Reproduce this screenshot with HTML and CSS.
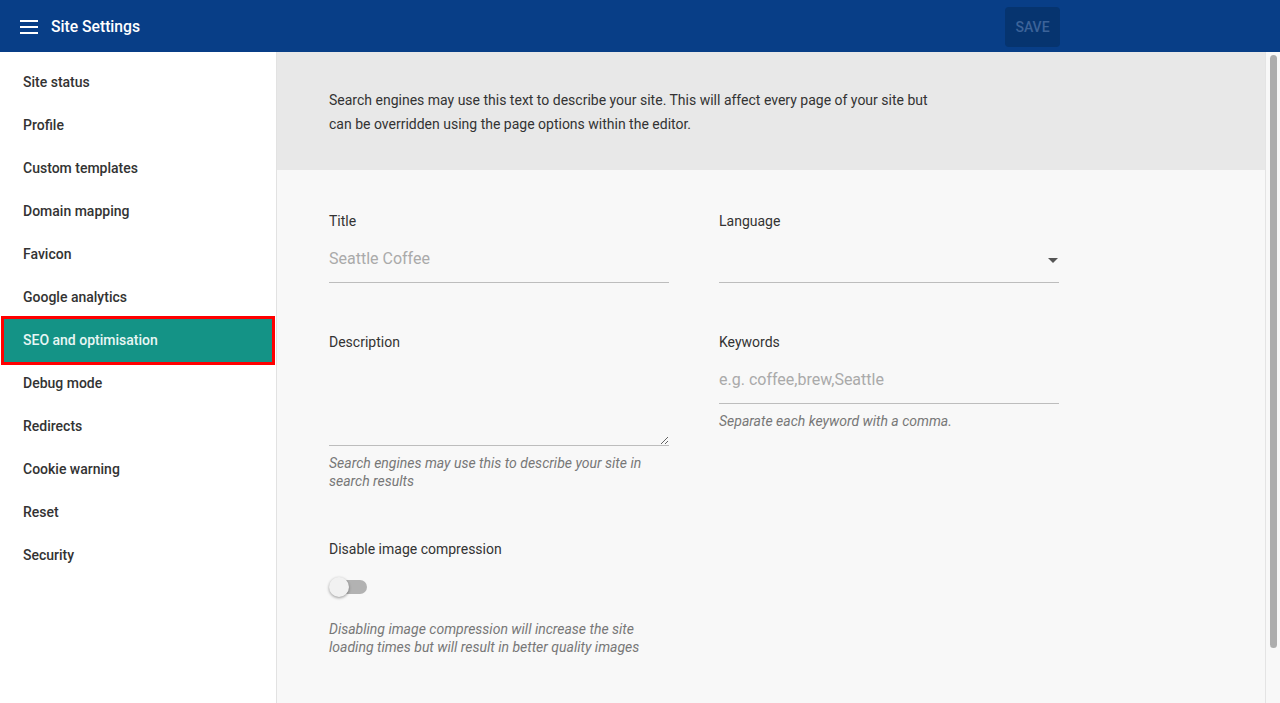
FILE: index.html
```html
<!DOCTYPE html>
<html lang="en">
<head>
  <meta charset="UTF-8" />
  <meta name="viewport" content="width=device-width, initial-scale=1.0"/>
  <title>Site Settings</title>
  <link rel="stylesheet" href="styles.css">
</head>
<body>
  <header class="topbar">
    <div class="menu-icon">
      <svg width="18" height="14" viewBox="0 0 18 14"><path d="M0 1h18M0 7h18M0 13h18" stroke="#fff" stroke-width="2"/></svg>
    </div>
    <div class="app-title">Site Settings</div>
    <button class="save-btn" disabled>SAVE</button>
  </header>

  <div class="layout">
    <nav class="sidebar">
      <a class="nav-item">Site status</a>
      <a class="nav-item">Profile</a>
      <a class="nav-item">Custom templates</a>
      <a class="nav-item">Domain mapping</a>
      <a class="nav-item">Favicon</a>
      <a class="nav-item">Google analytics</a>
      <a class="nav-item active">SEO and optimisation</a>
      <a class="nav-item">Debug mode</a>
      <a class="nav-item">Redirects</a>
      <a class="nav-item">Cookie warning</a>
      <a class="nav-item">Reset</a>
      <a class="nav-item">Security</a>
    </nav>

    <main class="content">
      <div class="intro">
        <p>Search engines may use this text to describe your site. This will affect every page of your site but can be overridden using the page options within the editor.</p>
      </div>

      <div class="form">
        <div class="row">
          <div class="field">
            <label for="title">Title</label>
            <input id="title" type="text" placeholder="Seattle Coffee">
          </div>
          <div class="field">
            <label for="language">Language</label>
            <div class="select">
              <select id="language"><option></option></select>
              <span class="arrow"></span>
            </div>
          </div>
        </div>

        <div class="row">
          <div class="field">
            <label for="description">Description</label>
            <textarea id="description"></textarea>
            <div class="hint">Search engines may use this to describe your site in search results</div>
          </div>
          <div class="field">
            <label for="keywords">Keywords</label>
            <input id="keywords" type="text" placeholder="e.g. coffee,brew,Seattle">
            <div class="hint">Separate each keyword with a comma.</div>
          </div>
        </div>

        <div class="row">
          <div class="field">
            <label>Disable image compression</label>
            <div class="toggle">
              <span class="track"></span>
              <span class="thumb"></span>
            </div>
            <div class="hint hint-far">Disabling image compression will increase the site loading times but will result in better quality images</div>
          </div>
        </div>
      </div>
    </main>

    <!-- page scrollbar -->
    <div class="scrollbar">
      <div class="scroll-thumb"></div>
    </div>
  </div>
</body>
</html>
```

FILE: styles.css
```css
* {
  box-sizing: border-box;
}
body {
  margin: 0;
  height: 703px;
  overflow: hidden;
  font-family: Roboto, "Noto Sans", sans-serif;
  color: #333;
  background: #fff;
}
.topbar {
  height: 52px;
  background: #083e87;
  display: flex;
  align-items: center;
  padding: 1px 220px 0 20px;
}
.menu-icon {
  width: 18px;
  height: 14px;
  display: flex;
}
.app-title {
  color: #fff;
  font-size: 15.7px;
  font-weight: 500;
  margin-left: 13px;
}
.save-btn {
  margin-left: auto;
  width: 55px;
  height: 40px;
  border: none;
  border-radius: 4px;
  background: #06346f;
  color: #3c6399;
  font-family: Roboto, sans-serif;
  font-size: 14px;
  font-weight: 500;
  padding: 0;
}
.layout {
  display: flex;
  height: 651px;
}
.sidebar {
  width: 277px;
  flex: none;
  border-right: 1px solid #e2e2e2;
  padding-top: 9px;
  background: #fff;
}
.nav-item {
  display: block;
  height: 43px;
  line-height: 43px;
  padding-left: 23px;
  font-size: 14px;
  font-weight: 500;
  color: #333;
}
.nav-item.active {
  background: #149386;
  color: #e8f6f4;
  margin: 0 4px;
  padding-left: 19px;
  outline: 3px solid #f00;
}
.content {
  flex: 1;
  overflow: hidden;
  background: #f8f8f8;
}
.scrollbar {
  width: 15px;
  flex: none;
  background: #f8f8f8;
  border-left: 1px solid #e4e4e4;
  padding: 3px 3px 0 4px;
}
.scroll-thumb {
  height: 593px;
  border-radius: 4px;
  background: #adadad;
}
.intro {
  background: #e8e8e8;
  padding: 36px 52px 34px;
}
.intro p {
  margin: 0;
  max-width: 610px;
  font-size: 14px;
  line-height: 24px;
  color: #333;
}
.form {
  padding: 41px 52px 59px;
}
.row {
  display: flex;
  gap: 50px;
  margin-bottom: 49px;
}
.row:last-child {
  margin-bottom: 0;
}
.field {
  width: 340px;
}
.field label {
  display: block;
  font-size: 14px;
  line-height: 20px;
  color: #333;
  margin-bottom: 14px;
}
.field input,
.field select {
  display: block;
  width: 100%;
  height: 38px;
  border: none;
  border-bottom: 1px solid #bdbdbd;
  background: transparent;
  padding: 4px 0 14px;
  font-family: Roboto, sans-serif;
  font-size: 16px;
  line-height: 19px;
  color: #333;
  outline: none;
  appearance: none;
}
.field input::placeholder {
  color: #aaa;
}
.select {
  position: relative;
}
.select .arrow {
  position: absolute;
  right: 1px;
  top: 13px;
  border-left: 5px solid transparent;
  border-right: 5px solid transparent;
  border-top: 5px solid #555;
}
.field textarea {
  display: block;
  width: 100%;
  height: 80px;
  border: none;
  border-bottom: 1px solid #bdbdbd;
  background: transparent;
  font-family: Roboto, sans-serif;
  font-size: 16px;
  outline: none;
  padding: 0;
}
.hint {
  margin-top: 8px;
  font-size: 14px;
  line-height: 18px;
  font-style: italic;
  color: #777;
}
.hint-far {
  margin-top: 23px;
}
.toggle {
  position: relative;
  width: 38px;
  height: 20px;
  margin-top: 18px;
}
.toggle .track {
  position: absolute;
  left: 2px;
  right: 0;
  top: 3px;
  height: 14px;
  border-radius: 7px;
  background: #b2b2b2;
}
.toggle .thumb {
  position: absolute;
  left: 0;
  top: 0;
  width: 20px;
  height: 20px;
  border-radius: 50%;
  background: #f1f1f1;
  box-shadow: 0 1px 3px rgba(0,0,0,0.4);
}
```
